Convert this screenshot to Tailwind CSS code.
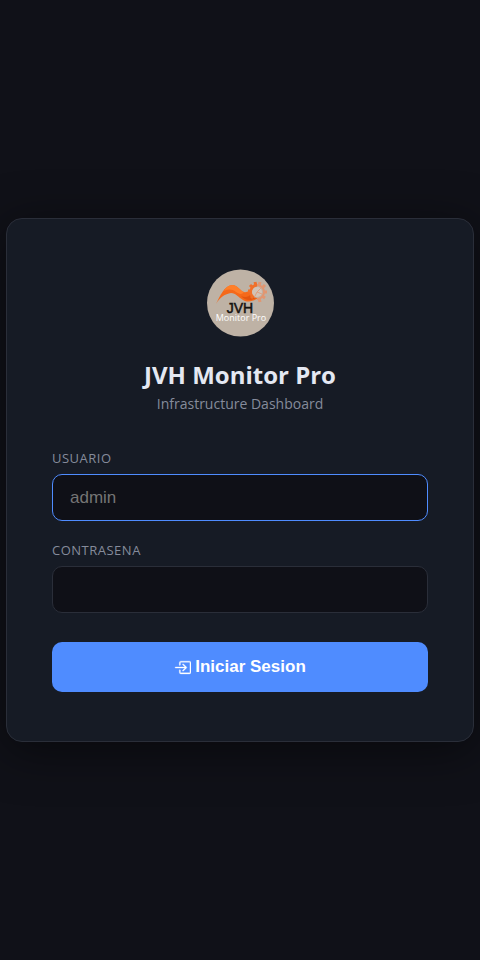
<!DOCTYPE html>
<html lang="es">
  <head>
    <meta charset="UTF-8" />
    <meta name="viewport" content="width=device-width, initial-scale=1.0" />
    <title>JVH Monitor Pro</title>
    <script src="https://cdn.jsdelivr.net/npm/@tailwindcss/browser@4"></script>
  </head>

  <body class="bg-[#101118] flex justify-center items-center min-h-screen px-[6px] font-['Segoe_UI','Open_Sans',sans-serif]">
    <main class="w-full max-w-[468px] bg-[#161b25] px-[45px] pt-[50px] pb-[49px] rounded-2xl border border-[#2a2e39] shadow-[0_8px_48px_rgba(0,0,0,0.5)]">
      <header class="flex flex-col items-center text-center">
        <svg class="size-[68px]" viewBox="0 0 68 68" role="img" aria-label="JVH Monitor Pro">
          <circle cx="34.500" cy="34" r="33.500" fill="#beb2a5" />
          <!-- wave -->
          <path d="M10 35C14 27 18 17 26 16C32 16 34 22 38 23C41 24 44 21 46 20L45 24C46 28 48 29 52 29C48 32 42 34 37 31C32 28 30 24 25 24C19 25 14 28 10 35Z" fill="#f5691a" />
          <path d="M26 16C32 16 34 22 38 23C36 26 33 25 30 23C26 20 22 20 18 22C20 18 23 16 26 16Z" fill="#ff7f2a" />
          <path d="M35 27C39 29 43 28 45 25C46 28 48 29 50 29C45 32 39 32 35 27Z" fill="#e4550f" />
          <!-- gear, fading to the right -->
          <path d="M51 16A7 7 0 0 0 47 28" fill="none" stroke="#f0702a" stroke-width="3" />
          <path d="M49 13l1 4M44 16l3 3M42 22h4M45 29l3-3" stroke="#f0702a" stroke-width="3" />
          <path d="M51 16A7 7 0 0 1 51 30" fill="none" stroke="#e29670" stroke-width="2" />
          <path d="M54 13l-1 4M59 16l-3 3M61 23h-4M59 29l-3-2M54 33l-1-4" stroke="#e29670" stroke-width="3" />
          <circle cx="51" cy="23" r="5" fill="#d2c3b7" />
          <path d="M51 23L55 19M51 23L56 25M51 23L49 27" stroke="#de9f80" stroke-width="1" />
          <text x="34" y="44" text-anchor="middle" font-family="Liberation Sans, sans-serif" font-size="14" fill="#15120f" stroke="#15120f" stroke-width="0.5">JVH</text>
          <text x="35" y="52" text-anchor="middle" font-family="Open Sans, sans-serif" font-size="9" font-weight="500" fill="#ffffff">Monitor Pro</text>
        </svg>
        <h1 class="mt-[20px] text-[24px] leading-[35px] font-bold text-[#e4e8f2]">JVH Monitor Pro</h1>
        <p class="text-[14px] leading-[24px] text-[#858b9b]">Infrastructure Dashboard</p>
      </header>

      <form id="loginForm" class="mt-[33px]">
        <label for="username" class="block text-[13px] leading-[18px] tracking-[0.5px] uppercase text-[#858b9b]">Usuario</label>
        <input type="text" id="username" name="username" class="block w-full h-[47px] px-[17px] mt-[7px] bg-[#0f1017] border border-[#4f8cff] rounded-[10px] text-[17px] text-[#e4e8f2] placeholder:text-[#757575] font-['Liberation_Sans',sans-serif] outline-none" placeholder="admin" required />

        <label for="password" class="block mt-[20px] text-[13px] leading-[18px] tracking-[0.5px] uppercase text-[#858b9b]">Contrasena</label>
        <input type="password" id="password" name="password" class="block w-full h-[47px] px-[17px] mt-[7px] bg-[#0f1017] border border-[#2a2e39] rounded-[10px] text-[17px] text-[#e4e8f2] font-['Liberation_Sans',sans-serif] outline-none focus:border-[#4f8cff]" required />

        <button type="submit" class="flex items-center justify-center gap-[4px] w-full h-[50px] mt-[29px] bg-[#4f8cff] rounded-[10px] text-[17px] font-bold text-white font-['Liberation_Sans',sans-serif] cursor-pointer">
          <svg class="size-[17px]" viewBox="0 0 16 16" fill="currentColor" stroke="currentColor" stroke-width="0.3" aria-hidden="true">
            <path fill-rule="evenodd" d="M6 3.5a.5.5 0 0 1 .5-.5h8a.5.5 0 0 1 .5.5v9a.5.5 0 0 1-.5.5h-8a.5.5 0 0 1-.5-.5v-2a.5.5 0 0 0-1 0v2A1.5 1.5 0 0 0 6.500 14h8a1.500 1.500 0 0 0 1.500-1.500v-9A1.500 1.500 0 0 0 14.500 2h-8A1.500 1.500 0 0 0 5 3.500v2a.5.5 0 0 0 1 0z" />
            <path fill-rule="evenodd" d="M11.854 8.354a.5.5 0 0 0 0-.708l-3-3a.5.5 0 1 0-.708.708L10.293 7.500H1.500a.5.5 0 0 0 0 1h8.793l-2.147 2.146a.5.5 0 0 0 .708.708z" />
          </svg>
          Iniciar Sesion
        </button>
      </form>
    </main>
  </body>
</html>
